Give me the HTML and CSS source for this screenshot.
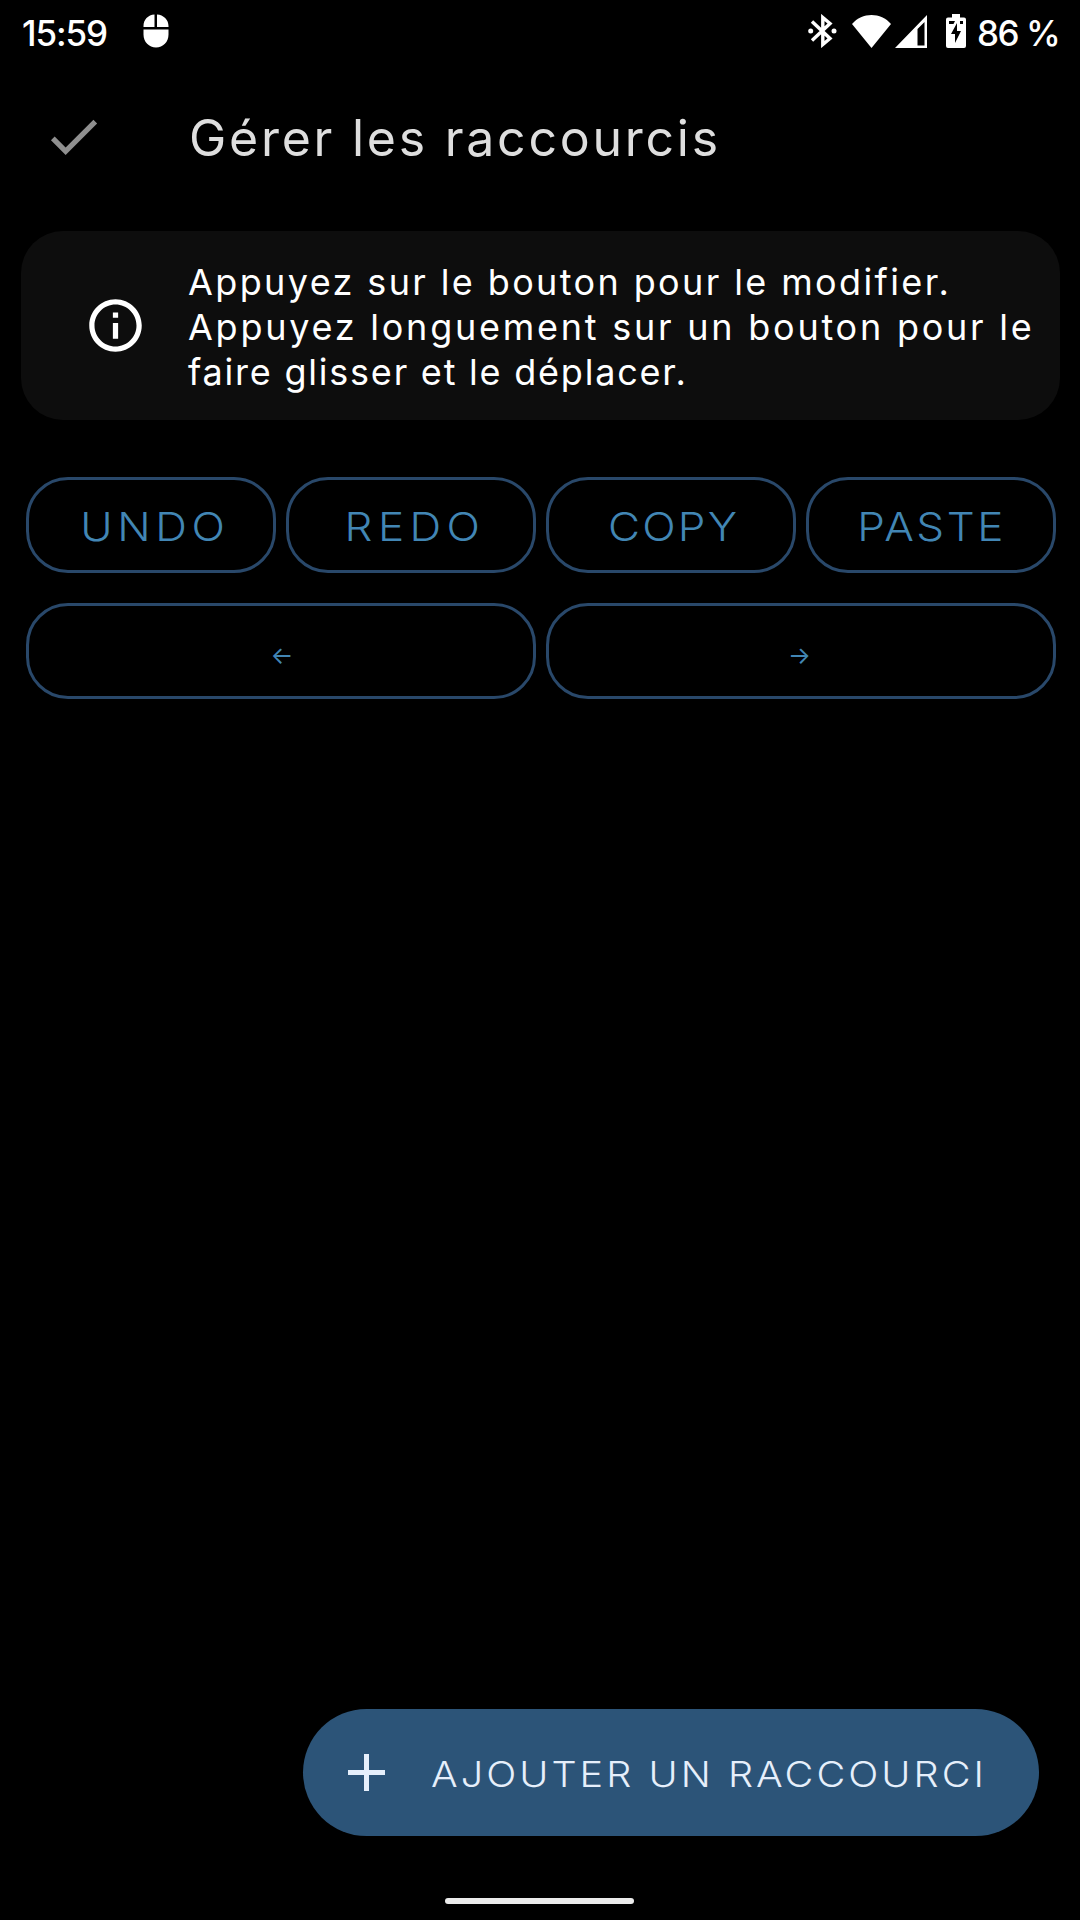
FILE: index.html
```html
<!DOCTYPE html>
<html lang="fr">
<head>
  <meta charset="UTF-8" />
  <meta name="viewport" content="width=device-width, initial-scale=1.0"/>
  <title>Gérer les raccourcis</title>
  <link rel="stylesheet" href="styles.css">
</head>
<body>
  <div class="status-bar">
    <span class="clock">15:59</span>
    <svg class="mouse" viewBox="0 0 26 34" fill="#fff">
      <path d="M11.5 0.5V13H0.5V12C0.5 5.500 5 1 11.500 0.500zM14 0.500C20.500 1 25.500 5.500 25.500 12V13H14zM0.500 15.500H25.500V20.500C25.500 28 20 33.500 13 33.500S0.500 28 0.500 20.500z"/>
    </svg>
    <div class="status-right">
      <svg class="bluetooth" viewBox="0 0 30 34">
        <path d="M4 7.500 22 24.500 14.800 30.500V3.500L22 9.500 4 26.500" fill="none" stroke="#fff" stroke-width="3.400"/>
        <circle cx="2.700" cy="17" r="2.500" fill="#fff"/>
        <circle cx="26" cy="17" r="2.500" fill="#fff"/>
      </svg>
      <svg class="wifi" viewBox="0 0 39 33" fill="#fff">
        <path d="M0 9C10-3 29-3 39 9L19.500 33z"/>
      </svg>
      <svg class="signal" viewBox="0 0 32 33">
        <path d="M32 0V33H0zM29.500 7 22.500 14V30.500H29.500z" fill="#fff" fill-rule="evenodd"/>
      </svg>
      <svg class="battery" viewBox="0 0 20 34">
        <path d="M6 0H14V3.500H18Q20 3.500 20 5.500V32Q20 34 18 34H2Q0 34 0 32V5.500Q0 3.500 2 3.500H6z" fill="#fff"/>
        <path d="M11 9 5 20H9V29L15 17H11z" fill="#000"/>
        <path d="M3 7H9L7.500 10H3zM14 7H17V10H14z" fill="#000"/>
      </svg>
      <span class="percent">86 %</span>
    </div>
  </div>

  <header class="toolbar">
    <svg class="check" viewBox="0 0 24 24" fill="#8f8f8f">
      <path d="M9 16.170 4.830 12l-1.420 1.410L9 19 21 7l-1.410-1.410z"/>
    </svg>
    <h1>Gérer les raccourcis</h1>
  </header>

  <div class="info-box">
    <svg class="info-icon" viewBox="0 0 24 24" fill="#fff">
      <path d="M11 7h2v2h-2zm0 4h2v6h-2zm1-9C6.480 2 2 6.480 2 12s4.480 10 10 10 10-4.480 10-10S17.520 2 12 2zm0 18c-4.410 0-8-3.590-8-8s3.590-8 8-8 8 3.590 8 8-3.590 8-8 8z"/>
    </svg>
    <div class="info-text">
      <p class="line-1">Appuyez sur le bouton pour le modifier.</p>
      <p class="line-2">Appuyez longuement sur un bouton pour le</p>
      <p class="line-3">faire glisser et le déplacer.</p>
    </div>
  </div>

  <div class="shortcuts">
    <button class="undo"><span>UNDO</span></button>
    <button class="redo"><span>REDO</span></button>
    <button class="copy"><span>COPY</span></button>
    <button class="paste"><span>PASTE</span></button>
    <button class="wide left">←</button>
    <button class="wide right">→</button>
  </div>

  <button class="add-btn">
    <svg class="plus" viewBox="0 0 37 37" fill="#e6effb">
      <path d="M16 0H21V16H37V21H21V37H16V21H0V16H16z"/>
    </svg>
    <span>AJOUTER UN RACCOURCI</span>
  </button>
  <div class="home-bar"></div>
</body>
</html>
```
FILE: styles.css
```css
* {
  box-sizing: border-box;
}
body {
  margin: 0;
  height: 1920px;
  background: #000;
  color: #fff;
  font-family: Inter, "Open Sans", sans-serif;
  display: flex;
  flex-direction: column;
  overflow: hidden;
}
button {
  font-family: inherit;
  font-weight: 300;
  cursor: pointer;
}
svg {
  display: block;
  flex: none;
}

/* status bar */
.status-bar {
  height: 62px;
  display: flex;
  align-items: center;
  padding: 0 22px 0 22px;
  font-size: 35px;
  font-weight: 500;
  letter-spacing: -1.1px;
  white-space: nowrap;
}
.clock {
  width: 121px;
  padding-top: 4px;
}
.mouse {
  width: 26px;
  height: 34px;
}
.status-right {
  margin-left: auto;
  display: flex;
  align-items: center;
}
.bluetooth {
  width: 30px;
  height: 34px;
  margin-right: 14px;
}
.wifi {
  width: 39px;
  height: 33px;
  margin-right: 4px;
}
.signal {
  width: 32px;
  height: 33px;
  margin-right: 19px;
}
.battery {
  width: 20px;
  height: 34px;
  margin-right: 11px;
}
.percent {
  width: 81px;
  padding-top: 4px;
  letter-spacing: -1.5px;
}

/* toolbar */
.toolbar {
  height: 169px;
  display: flex;
  align-items: flex-start;
  padding: 43px 0 0 42px;
}
.check {
  width: 63px;
  height: 63px;
}
h1 {
  margin: 3px 0 0 84px;
  font-size: 50px;
  line-height: 60px;
  font-weight: 400;
  letter-spacing: 2.75px;
  color: #dedede;
}

.info-box {
  height: 189px;
  margin: 0 20px 0 21px;
  border-radius: 42px;
  background: #0d0d0d;
  display: flex;
  align-items: center;
  padding-left: 63px;
}
.info-icon {
  width: 63px;
  height: 63px;
}
.info-text {
  margin-left: 41px;
  padding-top: 3px;
  font-size: 36px;
  line-height: 45px;
  white-space: nowrap;
}
.info-text p {
  margin: 0;
}
.line-1 { letter-spacing: 2.38px; }
.line-2 { letter-spacing: 2.76px; }
.line-3 { letter-spacing: 1.78px; }

/* shortcut grid */
.shortcuts {
  display: grid;
  grid-template-columns: repeat(4, 1fr);
  gap: 30px 10px;
  margin: 57px 24px 0 26px;
}
.shortcuts button {
  height: 96px;
  padding: 3px 0 0;
  background: none;
  border: 3px solid #29486a;
  border-radius: 42px;
  color: #4286b4;
  font-size: 40px;
}
.shortcuts span, .add-btn span {
  display: inline-block;
  transform: scaleX(1.1);
}
.shortcuts .undo { letter-spacing: 4.2px; padding-left: 8px; }
.shortcuts .redo { letter-spacing: 4.9px; padding-left: 8px; }
.shortcuts .copy { letter-spacing: 2px; padding-left: 5px; }
.shortcuts .paste { letter-spacing: 2.3px; padding-left: 2px; }
.shortcuts .wide {
  grid-column: span 2;
  padding-top: 9px;
  font-size: 24px;
  font-weight: 400;
}
.shortcuts .left { padding-left: 2px; }
.shortcuts .right { padding-right: 3px; }

.add-btn {
  margin: auto 41px 0 auto;
  width: 736px;
  height: 127px;
  border: none;
  border-radius: 64px;
  background: #2c5478;
  color: #e6effb;
  font-size: 36px;
  letter-spacing: 2.75px;
  display: flex;
  align-items: center;
  padding: 0 0 0 45px;
  white-space: nowrap;
}
.add-btn span {
  padding-top: 2px;
  transform-origin: left;
}
.plus {
  width: 37px;
  height: 37px;
  margin-right: 46px;
}
.home-bar {
  width: 189px;
  height: 6px;
  margin: 62px 446px 16px 445px;
  border-radius: 3px;
  background: #ebebeb;
}
```
